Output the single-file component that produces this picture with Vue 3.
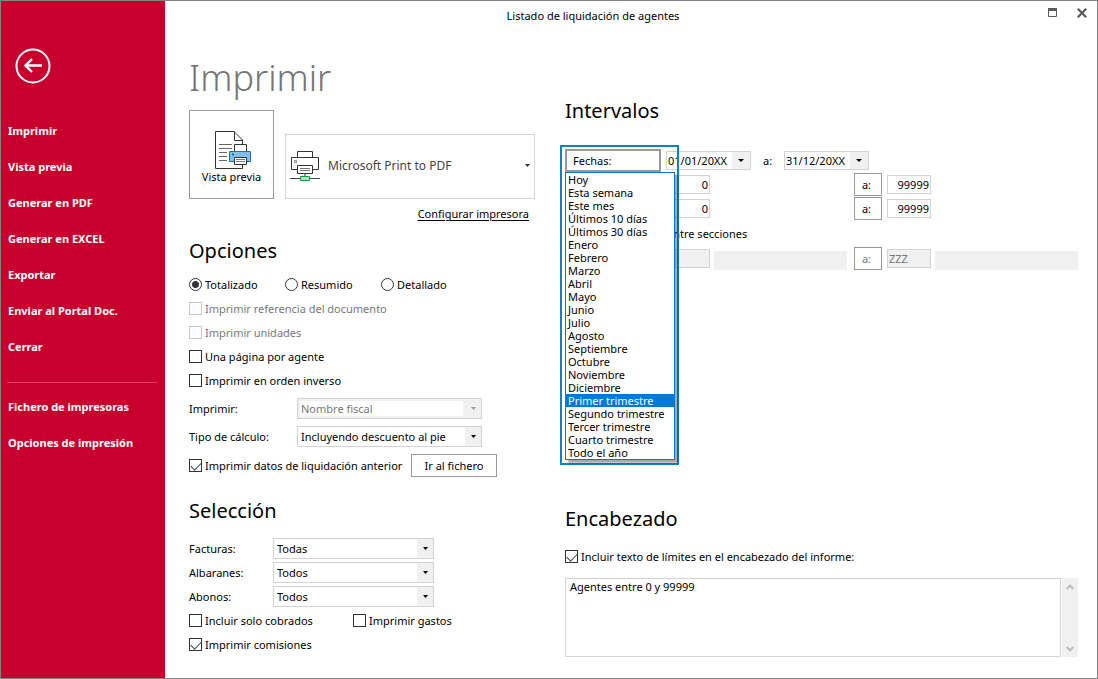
<script setup>
import { ref } from 'vue'

const mainActions = ['Imprimir', 'Vista previa', 'Generar en PDF', 'Generar en EXCEL', 'Exportar', 'Enviar al Portal Doc.', 'Cerrar']
const setupActions = ['Fichero de impresoras', 'Opciones de impresión']

const modes = ['Totalizado', 'Resumido', 'Detallado']
const mode = ref('Totalizado')

const flags = ref([
  { id: 'ref', label: 'Imprimir referencia del documento', on: false, disabled: true },
  { id: 'uni', label: 'Imprimir unidades', on: false, disabled: true },
  { id: 'pag', label: 'Una página por agente', on: false, disabled: false },
  { id: 'inv', label: 'Imprimir en orden inverso', on: false, disabled: false }
])
const previous = ref(true)

const filters = [
  { id: 'facturas', label: 'Facturas:', value: 'Todas' },
  { id: 'albaranes', label: 'Albaranes:', value: 'Todos' },
  { id: 'abonos', label: 'Abonos:', value: 'Todos' }
]
const onlyPaid = ref(false)
const expenses = ref(false)
const commissions = ref(true)

const periods = [
  'Hoy', 'Esta semana', 'Este mes', 'Últimos 10 días', 'Últimos 30 días',
  'Enero', 'Febrero', 'Marzo', 'Abril', 'Mayo', 'Junio', 'Julio', 'Agosto',
  'Septiembre', 'Octubre', 'Noviembre', 'Diciembre',
  'Primer trimestre', 'Segundo trimestre', 'Tercer trimestre', 'Cuarto trimestre', 'Todo el año'
]
const period = ref('Primer trimestre')

const dateFrom = ref('01/01/20XX')
const dateTo = ref('31/12/20XX')
const ranges = ref([
  { from: '0', to: '99999' },
  { from: '0', to: '99999' }
])
const includeLimits = ref(true)
const header = ref('Agentes entre 0 y 99999')
</script>

<template>
  <div class="window">
    <aside class="sidebar">
      <button class="back" aria-label="Volver">
        <svg width="36" height="36" viewBox="0 0 36 36">
          <circle cx="18" cy="18" r="16.5" fill="none" stroke="#fff" stroke-width="2" />
          <path d="M10 17.500H27M17 11L10.500 17.500L17 24" fill="none" stroke="#fff" stroke-width="2.400" />
        </svg>
      </button>
      <nav class="menu">
        <button v-for="a in mainActions" :key="a">{{ a }}</button>
        <hr />
        <button v-for="a in setupActions" :key="a">{{ a }}</button>
      </nav>
    </aside>

    <div class="body">
      <header class="titlebar">
        <span class="title">Listado de liquidación de agentes</span>
        <div class="controls">
          <button aria-label="Maximizar">
            <svg width="9" height="9" viewBox="0 0 9 9"><path d="M.5 0V8.500H8.500V0" fill="none" stroke="#5a5a5a" /><path d="M0 0H9V3H0Z" fill="#5a5a5a" /></svg>
          </button>
          <button aria-label="Cerrar ventana">
            <svg width="10" height="10" viewBox="0 0 10 10"><path d="M.8 .8L9.200 9.200M9.200 .8L.8 9.200" stroke="#5a5a5a" stroke-width="2.200" /></svg>
          </button>
        </div>
      </header>

      <main class="columns">
        <div class="left">
          <h1>Imprimir</h1>
          <div class="printer-row">
            <button class="preview">
              <svg width="36" height="40" viewBox="0 0 36 40" fill="none">
                <path d="M27.500 14V10L19 1.500H.5V38.500H27.500V35" stroke="#333" />
                <path d="M19.500 1.500V10.500H27.500" stroke="#333" />
                <path d="M4 14.500H17M4 18.500H17M4 22.500H12M4 26.500H12M4 30.500H12" stroke="#666" />
                <path d="M19.500 21V14.500H31.500V21" fill="#fff" stroke="#333" />
                <path d="M14.500 21.500H35.500V31.500H14.500Z" fill="#83bfec" stroke="#1a6fb8" />
                <path d="M17 23.500H19V25.500H17Z" fill="#1a6fb8" />
                <path d="M19.500 27.500H31.500V34.500H19.500Z" fill="#fff" stroke="#333" />
                <path d="M21 29.500H30M21 31.500H30" stroke="#777" />
              </svg>
              <span>Vista previa</span>
            </button>
            <div class="printer">
              <svg width="30" height="32" viewBox="0 0 30 32" fill="none">
                <path d="M7.500 7V1.500H22.500V7" stroke="#333" />
                <path d="M1.500 7.500H28.500V19.500H1.500Z" fill="#fff" stroke="#333" />
                <path d="M4.500 10.500H6.500V12.500H4.500Z" stroke="#888" />
                <path d="M7.500 15.500H22.500V23.500H7.500Z" fill="#fff" stroke="#333" />
                <path d="M10 18.500H20M10 20.500H20" stroke="#777" />
                <path d="M15 24V26" stroke="#999" stroke-width="2" />
                <path d="M0 28.500H30" stroke="#444" />
                <path d="M10.500 26.500H19.500V30.500H10.500Z" fill="#b5dfb8" stroke="#18994a" />
              </svg>
              <select aria-label="Impresora"><option>Microsoft Print to PDF</option></select>
              <svg width="5" height="3" viewBox="0 0 5 3"><path d="M0 0H5L2.500 3Z" fill="#333" /></svg>
            </div>
          </div>
          <div class="link-row"><a href="#">Configurar impresora</a></div>

          <section class="options">
            <h2>Opciones</h2>
            <div class="line modes">
              <label v-for="m in modes" :key="m" class="choice">
                <input v-model="mode" type="radio" name="mode" :value="m" />{{ m }}
              </label>
            </div>
            <div v-for="f in flags" :key="f.id" class="line">
              <label class="choice" :class="{ off: f.disabled }">
                <input v-model="f.on" type="checkbox" :disabled="f.disabled" />{{ f.label }}
              </label>
            </div>
            <div class="fields">
              <label for="print-name">Imprimir:</label>
              <div class="combo off">
                <select id="print-name" disabled><option>Nombre fiscal</option></select>
                <span class="arrow"><svg width="5" height="3" viewBox="0 0 5 3"><path d="M0 0H5L2.500 3Z" /></svg></span>
              </div>
              <label for="calc-type">Tipo de cálculo:</label>
              <div class="combo">
                <select id="calc-type"><option>Incluyendo descuento al pie</option></select>
                <span class="arrow"><svg width="5" height="3" viewBox="0 0 5 3"><path d="M0 0H5L2.500 3Z" /></svg></span>
              </div>
            </div>
            <div class="line previous">
              <label class="choice"><input v-model="previous" type="checkbox" />Imprimir datos de liquidación anterior</label>
              <button class="file-btn">Ir al fichero</button>
            </div>
          </section>

          <section class="selection">
            <h2>Selección</h2>
            <div class="filters">
              <template v-for="f in filters" :key="f.id">
                <label :for="f.id">{{ f.label }}</label>
                <div class="combo">
                  <select :id="f.id"><option>{{ f.value }}</option></select>
                  <span class="arrow"><svg width="5" height="3" viewBox="0 0 5 3"><path d="M0 0H5L2.500 3Z" /></svg></span>
                </div>
              </template>
            </div>
            <div class="line pair">
              <label class="choice"><input v-model="onlyPaid" type="checkbox" />Incluir solo cobrados</label>
              <label class="choice"><input v-model="expenses" type="checkbox" />Imprimir gastos</label>
            </div>
            <div class="line">
              <label class="choice"><input v-model="commissions" type="checkbox" />Imprimir comisiones</label>
            </div>
          </section>
        </div>

        <div class="right">
          <section class="intervals">
            <h2>Intervalos</h2>
            <div class="dates">
              <div class="dates-anchor">
                <button class="dates-btn" aria-haspopup="listbox" aria-expanded="true">Fechas:</button>
                <ul class="periods" role="listbox" aria-label="Periodo">
                  <li v-for="p in periods" :key="p" role="option" :aria-selected="p === period" :class="{ active: p === period }" @click="period = p">{{ p }}</li>
                </ul>
                <div class="focus-frame"></div>
              </div>
              <div class="date">
                <input v-model="dateFrom" aria-label="Fecha inicial" />
                <button aria-label="Abrir calendario inicial"><svg width="6" height="3" viewBox="0 0 6 3"><path d="M0 0H6L3 3Z" /></svg></button>
              </div>
              <label class="to" for="date-to">a:</label>
              <div class="date">
                <input id="date-to" v-model="dateTo" />
                <button aria-label="Abrir calendario final"><svg width="6" height="3" viewBox="0 0 6 3"><path d="M0 0H6L3 3Z" /></svg></button>
              </div>
            </div>
            <div v-for="(r, i) in ranges" :key="i" class="range">
              <input v-model="r.from" class="box num from" aria-label="Desde" />
              <button class="to-btn">a:</button>
              <input v-model="r.to" class="box num" aria-label="Hasta" />
            </div>
            <div class="sections-label">entre secciones</div>
            <div class="range">
              <input class="box from" aria-label="Sección inicial" disabled />
              <span class="bar first"></span>
              <button class="to-btn" disabled>a:</button>
              <input class="box" value="ZZZ" aria-label="Sección final" disabled />
              <span class="bar last"></span>
            </div>
          </section>

          <section class="heading">
            <h2>Encabezado</h2>
            <div class="line">
              <label class="choice"><input v-model="includeLimits" type="checkbox" />Incluir texto de límites en el encabezado del informe:</label>
            </div>
            <div class="memo">
              <textarea v-model="header" aria-label="Texto del encabezado"></textarea>
              <div class="scroll">
                <svg width="8" height="6" viewBox="0 0 8 6"><path d="M.7 5L4 1.700L7.300 5" fill="none" stroke="#bbb" stroke-width="2" /></svg>
                <svg width="8" height="6" viewBox="0 0 8 6"><path d="M.7 1L4 4.300L7.300 1" fill="none" stroke="#bbb" stroke-width="2" /></svg>
              </div>
            </div>
          </section>
        </div>
      </main>
    </div>
  </div>
</template>

<style>
body {
  margin: 0;
  background: #fff;
}
</style>

<style scoped>
.window,
.window * {
  box-sizing: border-box;
}
.window {
  display: flex;
  min-height: 100vh;
  border: 1px solid #838383;
  background: #fff;
  color: #000;
  font-family: "Noto Sans", "Open Sans", sans-serif;
  font-size: 11px;
  line-height: 16px;
}
button,
input,
select,
textarea {
  margin: 0;
  padding: 0;
  border: 0;
  border-radius: 0;
  background: none;
  color: inherit;
  font: inherit;
}
select {
  appearance: none;
}
svg {
  display: block;
}

.sidebar {
  flex: none;
  width: 164px;
  padding-top: 47px;
  background: #c8002d;
  color: #fff;
}
.back {
  display: block;
  margin-left: 14px;
}
.menu {
  display: flex;
  flex-direction: column;
  margin-top: 29px;
}
.menu button {
  height: 36px;
  padding-left: 7px;
  font-weight: 700;
  text-align: left;
}
.menu hr {
  align-self: stretch;
  height: 1px;
  margin: 17px 8px 6px 6px;
  border: 0;
  background: #d44360;
}

.body {
  flex: 1;
  min-width: 0;
}
.titlebar {
  display: flex;
  height: 30px;
}
.title {
  flex: 1;
  line-height: 30px;
  text-align: center;
}
.controls {
  display: flex;
  gap: 20px;
  width: 76px;
  padding: 6px 10px 0 0;
  justify-content: flex-end;
  align-items: flex-start;
}
.controls button {
  display: grid;
  place-items: center;
  height: 11px;
}

.columns {
  display: grid;
  grid-template-columns: 346px minmax(0, 1fr);
  gap: 30px;
  padding: 0 19px 21px 24px;
}
.left {
  padding-top: 22px;
}
.right {
  padding-top: 64px;
}
h1 {
  margin: 0 0 7px;
  color: #757575;
  font-size: 36px;
  font-weight: 300;
  line-height: 50px;
}
h2 {
  margin: 0;
  font-size: 20px;
  font-weight: 400;
  line-height: 32px;
}

.printer-row {
  display: flex;
  align-items: flex-end;
  gap: 11px;
}
.preview {
  display: flex;
  flex-direction: column;
  align-items: center;
  justify-content: center;
  width: 85px;
  height: 89px;
  border: 1px solid #999;
}
.preview svg {
  margin: 4px 0 0 3px;
}
.preview span {
  line-height: 14px;
}
.printer {
  display: flex;
  flex: 1;
  align-items: center;
  height: 65px;
  padding: 0 4px 2px;
  border: 1px solid #d2d2d2;
}
.printer select {
  flex: 1;
  height: 30px;
  padding-left: 8px;
  color: #444;
  font-size: 12px;
}
.link-row {
  margin-top: 6px;
  padding-right: 6px;
  line-height: 18px;
  text-align: right;
}
.link-row a {
  color: #000;
  text-underline-offset: 2px;
}

.options h2 {
  margin: 12px 0 6px;
}
.line {
  display: flex;
  align-items: center;
  min-height: 24px;
}
.choice {
  display: flex;
  align-items: center;
  gap: 3px;
  white-space: nowrap;
}
.choice.off {
  color: #777;
}
.choice input {
  flex: none;
  width: 13px;
  height: 13px;
  margin-bottom: 2px;
  border: 1px solid #333;
  appearance: none;
}
.choice.off input {
  border-color: #c6c6c6;
}
.choice input[type="checkbox"]:checked::after {
  content: "";
  display: block;
  width: 9px;
  height: 5px;
  margin: 2px 0 0 1px;
  border: solid #444;
  border-width: 0 0 1px 1px;
  transform: rotate(-45deg);
}
.choice input[type="radio"] {
  border-radius: 50%;
}
.choice input[type="radio"]:checked {
  background: radial-gradient(circle, #333 3px, #fff 4px);
}
.modes {
  display: grid;
  grid-template-columns: 96px 96px 1fr;
}
.fields,
.filters {
  display: grid;
  align-items: center;
}
.fields {
  grid-template-columns: 108px 185px;
  grid-auto-rows: 28px;
  margin-top: 2px;
}
.filters {
  grid-template-columns: 84px 161px;
  grid-auto-rows: 24px;
  margin-top: 10px;
}
.combo {
  position: relative;
  display: flex;
  height: 21px;
  margin-bottom: 1px;
  border: 1px solid #d2d2d2;
}
.combo select {
  flex: 1;
  padding-left: 3px;
}
.combo .arrow {
  position: absolute;
  inset: 0 0 0 auto;
  display: grid;
  place-items: center;
  width: 16px;
  background: #f0f0f0;
  pointer-events: none;
}
.combo.off {
  padding: 2px;
  background: #f0f0f0;
}
.combo.off select {
  margin-right: 16px;
  padding-left: 1px;
  background: #fff;
  color: #777;
  opacity: 1;
}
.combo.off .arrow {
  fill: #999;
}
.previous {
  min-height: 30px;
  justify-content: space-between;
  padding-right: 38px;
}
.file-btn {
  width: 86px;
  height: 23px;
  margin-bottom: 1px;
  border: 1px solid #999;
}

.selection h2 {
  margin-top: 14px;
}
.pair {
  display: grid;
  grid-template-columns: 164px 1fr;
}

.dates {
  display: flex;
  align-items: center;
  margin: 22px 0 1px;
}
.dates-anchor {
  position: relative;
  width: 96px;
  margin-right: 5px;
}
.dates-btn {
  display: block;
  width: 100%;
  height: 23px;
  padding-left: 6px;
  border: 2px solid #999;
  text-align: left;
}
.periods {
  position: absolute;
  z-index: 2;
  top: 23px;
  left: 0;
  width: 110px;
  margin: 0;
  padding: 0;
  border: 1px solid #0078d7;
  background: #fff;
  box-shadow: 3px 3px 2px rgba(0, 0, 0, 0.35);
  list-style: none;
}
.periods li {
  padding-left: 2px;
  line-height: 13px;
}
.periods .active {
  background: #0078d7;
  color: #fff;
}
.focus-frame {
  position: absolute;
  z-index: 1;
  top: -4px;
  left: -5px;
  width: 119px;
  height: 320px;
  border: 2px solid #0a84c7;
  pointer-events: none;
}
.date {
  display: flex;
  width: 85px;
  height: 19px;
  border: 1px solid #d2d2d2;
}
.date input {
  flex: 1;
  min-width: 0;
  padding-left: 1px;
}
.date button {
  display: grid;
  place-items: center;
  width: 18px;
  background: #f0f0f0;
}
.to {
  width: 33px;
  padding-left: 12px;
}
.range {
  display: grid;
  grid-template-columns: 101px 44px 4px minmax(0, 133fr) 7px 28px 5px 44px 4px minmax(0, 143fr);
  align-items: center;
  margin-bottom: 1px;
}
.box {
  grid-column: 8;
  width: 100%;
  height: 19px;
  padding: 0 1px;
  border: 1px solid #d2d2d2;
}
.box.from {
  grid-column: 2;
}
.box.num {
  text-align: right;
}
.box:disabled {
  background: #f0f0f0;
  color: #777;
}
.to-btn {
  grid-column: 6;
  height: 23px;
  padding-right: 3px;
  border: 1px solid #999;
}
.to-btn:disabled {
  color: #777;
}
.sections-label {
  margin: 4px 0 3px;
  padding-left: 102px;
  line-height: 20px;
}
.bar {
  align-self: end;
  height: 19px;
  background: #f0f0f0;
}
.bar.first {
  grid-column: 4;
}
.bar.last {
  grid-column: 10;
}

.heading h2 {
  margin: 233px 0 10px;
}
.memo {
  display: flex;
  gap: 1px;
  height: 79px;
  margin-top: 9px;
}
.memo textarea {
  flex: 1;
  min-width: 0;
  padding: 0 4px;
  border: 1px solid #d2d2d2;
  resize: none;
}
.scroll {
  display: flex;
  flex-direction: column;
  justify-content: space-between;
  align-items: center;
  width: 16px;
  padding: 6px 0 5px;
  background: #f0f0f0;
}
</style>
